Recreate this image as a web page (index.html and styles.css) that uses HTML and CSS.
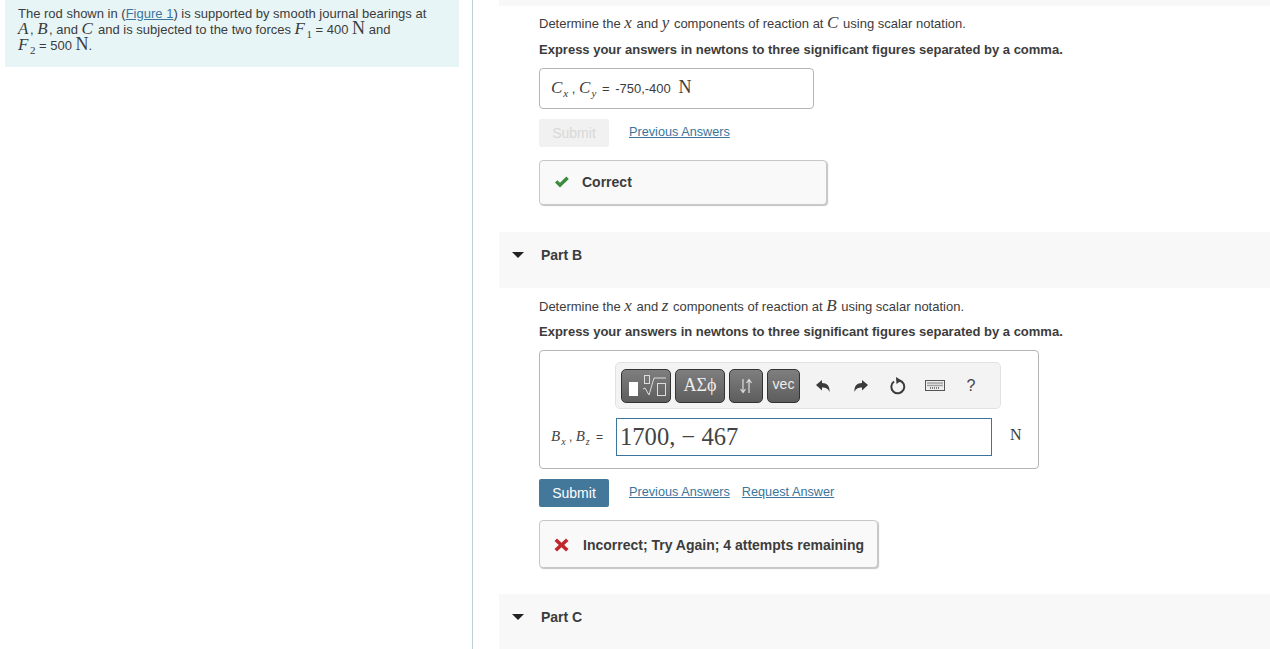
FILE: index.html
```html
<!DOCTYPE html>
<html lang="en">
<head>
<meta charset="utf-8">
<title>Part B</title>
<link rel="stylesheet" href="styles.css">
</head>
<body>
<div class="page">
  <aside class="left">
    <div class="intro">
      <p>The rod shown in (<a href="#">Figure 1</a>) is supported by smooth journal bearings at<br>
      <i class="m">A</i>, <i class="m">B</i>, and <i class="m">C</i> and is subjected to the two forces <i class="m">F</i><sub class="s">1</sub> = 400 <span class="mr">N</span> and<br>
      <i class="m">F</i><sub class="s">2</sub> = 500 <span class="mr">N</span>.</p>
    </div>
  </aside>
  <main class="right">
    <div class="stub"></div>
    <section class="part first">
      <p class="q">Determine the <i class="m">x</i> and <i class="m">y</i> components of reaction at <i class="m">C</i> using scalar notation.</p>
      <p class="ex">Express your answers in newtons to three significant figures separated by a comma.</p>
      <div class="ans-small">
        <span class="lab"><i class="m">C<sub class="s i">x</sub></i> , <i class="m">C<sub class="s i">y</sub></i></span> <span class="eq">=</span> <span class="val">-750,-400</span> <span class="mr unit">N</span>
      </div>
      <div class="actions">
        <span class="btn off">Submit</span>
        <a href="#">Previous Answers</a>
      </div>
      <div class="fb ok">
        <svg class="ic" width="16" height="12" viewBox="0 0 16 12"><path d="M1 6.5 L3.4 4.2 L6 6.8 L12.4 .6 L14.8 3 L6 11.4 Z" fill="#3c8b3c"/></svg>
        <span>Correct</span>
      </div>
    </section>
    <header class="head"><span class="tri"></span><span>Part B</span></header>
    <section class="part second">
      <p class="q">Determine the <i class="m">x</i> and <i class="m">z</i> components of reaction at <i class="m">B</i> using scalar notation.</p>
      <p class="ex">Express your answers in newtons to three significant figures separated by a comma.</p>
      <div class="ans-big">
        <div class="tools">
          <span class="tb w50">
            <svg width="42" height="26" viewBox="0 0 42 26"><rect x="4" y="9" width="9" height="14" fill="#fff"/><path d="M18 16 L20 15 L24 22 L29 5 H41" fill="none" stroke="#ddd" stroke-width="1"/><rect x="32.500" y="10.500" width="8" height="12" fill="none" stroke="#ddd"/><rect x="19.500" y="2.500" width="5" height="8" fill="none" stroke="#ddd"/></svg>
          </span>
          <span class="tb w50 greek">ΑΣϕ</span>
          <span class="tb w34">
            <svg width="14" height="16" viewBox="0 0 14 16"><path d="M4 1V14M1.500 11L4 14.500L6.500 11M10 15V2M7.500 5L10 1.500L12.500 5" fill="none" stroke="#ddd" stroke-width="1.200"/></svg>
          </span>
          <span class="tb w33 vec">vec</span>
          <span class="ti t1"><svg width="16" height="14" viewBox="0 0 16 14"><path d="M1 6 L7 1 V4 C12 4 15 7 14.500 13 C13 9.500 11 8.500 7 8.500 V11.500 Z" fill="#3a3a3a"/></svg></span>
          <span class="ti t2"><svg width="16" height="14" viewBox="0 0 16 14"><path d="M15 6 L9 1 V4 C4 4 1 7 1.500 13 C3 9.500 5 8.500 9 8.500 V11.500 Z" fill="#3a3a3a"/></svg></span>
          <span class="ti t3"><svg width="18" height="20" viewBox="0 0 18 20"><path d="M10.500 4.500 A6.500 6.500 0 1 1 5 5.500" fill="none" stroke="#3a3a3a" stroke-width="2"/><path d="M7 1 L12.500 4.500 L7.500 8 Z" fill="#3a3a3a"/></svg></span>
          <span class="ti t4"><svg width="20" height="11" viewBox="0 0 20 11"><rect x=".5" y=".5" width="19" height="10" fill="#eee" stroke="#555"/><path d="M2.500 3H17.500M2.500 5.500H17.500M5 8H15" stroke="#555" stroke-width="1.300" stroke-dasharray="1 1"/></svg></span>
          <span class="ti t5">?</span>
        </div>
        <div class="row">
          <span class="lab2"><i class="m">B<sub class="s i">x</sub></i> , <i class="m">B<sub class="s i">z</sub></i> <span class="eq2">=</span></span>
          <div class="field">1700, − 467</div>
          <span class="mr unit2">N</span>
        </div>
      </div>
      <div class="actions a2">
        <span class="btn on">Submit</span>
        <a href="#">Previous Answers</a>
        <a href="#" class="l2">Request Answer</a>
      </div>
      <div class="fb bad">
        <svg class="ic2" width="15" height="14" viewBox="0 0 15 14"><path d="M.5 3 L3 .5 L7.500 4.800 L12 .5 L14.500 3 L10.200 7 L14.500 11 L12 13.500 L7.500 9.200 L3 13.500 L.5 11 L4.800 7 Z" fill="#c0272d"/></svg>
        <span>Incorrect; Try Again; 4 attempts remaining</span>
      </div>
    </section>
    <header class="head"><span class="tri"></span><span>Part C</span></header>
  </main>
</div>
</body>
</html>
```
FILE: styles.css
```css
* { box-sizing: border-box; }
html, body { margin: 0; padding: 0; height: 649px; overflow: hidden; background: #fff; }
body { font-family: "Liberation Sans", Arial, sans-serif; font-size: 13px; color: #3c3c3c; }
p { margin: 0; }
a { color: #3c759c; text-decoration: underline; }
.page { display: flex; height: 649px; }
.left { width: 473px; flex: none; padding-left: 5px; border-right: 1px solid #bcd0dd; }
.intro { width: 454px; height: 67px; background: #e8f5f6; padding: 6px 13px; line-height: 16px; }
.intro p { white-space: nowrap; }
.m { font-family: "Liberation Serif", serif; font-style: italic; font-size: 17px; line-height: 0; letter-spacing: 1px; }
.intro .m { letter-spacing: 1.500px; }
.mr { font-family: "Liberation Serif", serif; font-size: 18px; line-height: 0; }
.s { font-family: "Liberation Serif", serif; font-size: 11px; line-height: 0; font-style: normal; letter-spacing: 0; }
.s.i { font-style: italic; }
.right { flex: 1; padding-left: 26px; min-width: 0; }
.stub { height: 6px; background: #f8f8f8; }
.part { padding-left: 40px; }
.first { height: 226px; padding-top: 10px; }
.second { height: 306px; padding-top: 11px; }
.q { height: 16px; line-height: 16px; }
.ex { margin-top: 10px; height: 16px; line-height: 16px; font-weight: bold; }
.first .ex { margin-top: 10px; }
.second .ex { margin-top: 9px; }
.ans-small { margin-top: 10px; width: 275px; height: 41px; border: 1px solid #b5b5b5; border-radius: 4px; padding: 0 11px; line-height: 40px; white-space: nowrap; }
.eq { margin-left: 2px; }
.val { margin-left: 2px; }
.unit { margin-left: 4px; }
.actions { margin-top: 10px; display: flex; align-items: center; height: 28px; }
.actions a { margin-left: 20px; margin-top: -3px; font-size: 12.700px; }
.actions .l2 { margin-left: 12px; }
.btn { width: 70px; height: 28px; border-radius: 2px; font-size: 14px; line-height: 28px; text-align: center; flex: none; }
.btn.off { background: #f1f1f1; color: #d8d8d8; }
.btn.on { background: #44789b; color: #fff; }
.fb { display: flex; margin-top: 13px; border: 1px solid #c8c8c8; border-radius: 4px; background: #f9f9f9; box-shadow: 1px 1px 1px #c4c4c4; font-size: 14px; font-weight: bold; align-items: center; }
.ok { width: 288px; height: 45px; padding-left: 14px; padding-bottom: 2px; }
.ok span { margin-left: 12px; }
.ic { flex: none; }
.ic2 { flex: none; }
.bad { width: 339px; height: 48px; padding-left: 14px; padding-top: 2px; }
.bad span { margin-left: 14px; white-space: nowrap; }
.head { height: 56px; background: #f8f8f8; display: flex; align-items: flex-start; padding: 15px 0 0 13px; font-size: 14px; line-height: 16px; font-weight: bold; }
.tri { width: 0; height: 0; margin: 5px 17px 0 0; border-left: 6px solid transparent; border-right: 6px solid transparent; border-top: 6px solid #222; }
.ans-big { margin-top: 10px; width: 500px; height: 119px; border: 1px solid #b5b5b5; border-radius: 4px; padding: 11px 0 0 11px; }
.tools { margin-left: 64px; width: 386px; height: 47px; background: #f3f3f3; border: 1px solid #e2e2e2; border-radius: 5px; display: flex; align-items: center; padding-left: 5px; gap: 4px; }
.tb { height: 34px; border: 1px solid #333; border-radius: 5px; background: linear-gradient(#7f7f7f, #5d5d5d); color: #eee; display: flex; align-items: center; justify-content: center; flex: none; }
.w50 { width: 50px; }
.w34 { width: 34px; }
.w33 { width: 33px; }
.greek { font-family: "Liberation Serif", serif; font-size: 18px; }
.vec { font-size: 14px; align-items: flex-start; padding-top: 6px; }
.ti { display: flex; align-items: center; justify-content: center; flex: none; width: 20px; height: 24px; }
.t1 { margin-left: 9px; }
.t2 { margin-left: 14px; }
.t3 { margin-left: 13px; }
.t4 { margin-left: 13px; }
.t5 { margin-left: 12px; font-size: 16px; color: #444; }
.row { display: flex; align-items: center; margin-top: 9px; height: 38px; }
.lab2 { width: 65px; flex: none; white-space: nowrap; font-size: 12px; color: #444; }
.lab2 .m { font-size: 15px; }
.lab2 .s { font-size: 10px; }
.eq2 { font-family: "Liberation Sans", sans-serif; font-style: normal; font-size: 12px; letter-spacing: 0; margin-left: 3px; }
.field { width: 376px; height: 38px; flex: none; border: 1px solid #3c759c; font-family: "Liberation Serif", serif; font-size: 24.600px; line-height: 36px; padding-left: 3px; color: #444; }
.unit2 { margin-left: 18px; line-height: 34px; align-self: flex-start; font-size: 16px; }
.a2 { margin-top: 10px; }
```
